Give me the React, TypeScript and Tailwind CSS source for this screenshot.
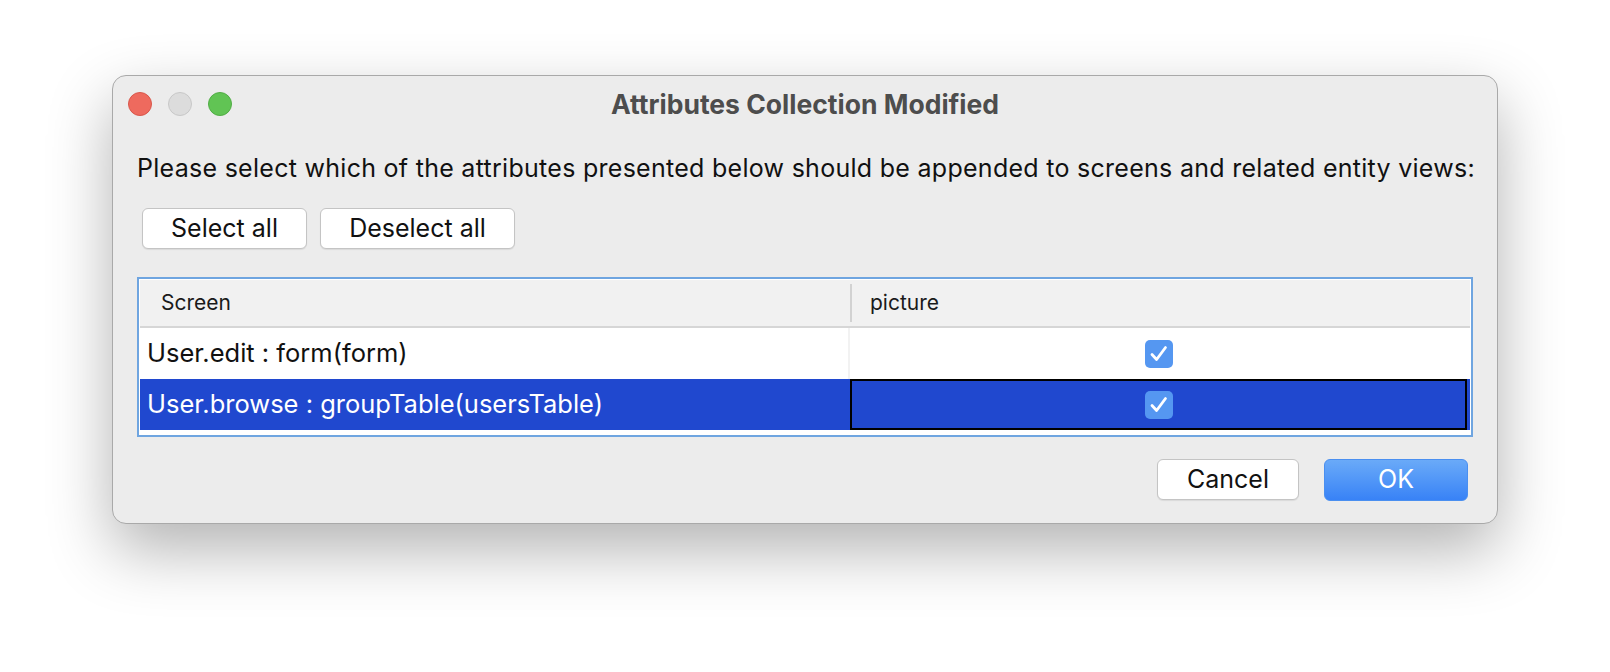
import React from "react";

const font = { fontFamily: "Inter, 'Liberation Sans', sans-serif" };

function Check() {
  return (
    <div className="w-[28px] h-[28px] rounded-[5px] bg-[#5597f1] flex items-center justify-center">
      <svg width="22" height="22" viewBox="0 0 22 22" fill="none">
        <path d="M4 11.5 L8.6 16.5 L17.5 4.5" stroke="white" strokeWidth="2.8" strokeLinecap="round" strokeLinejoin="round" />
      </svg>
    </div>
  );
}

function MacButton({ label, w }: { label: string; w: string }) {
  return (
    <button
      className={`${w} h-[41px] rounded-[6px] bg-white border border-[#c4c4c4] shadow-[0_1px_1px_rgba(0,0,0,0.08)] text-[25px] text-[#111] flex items-center justify-center`}
    >
      {label}
    </button>
  );
}

export default function App() {
  return (
    <div className="w-[1610px] h-[672px] bg-white pl-[112px] pt-[75px]" style={font}>
      {/* ========= WINDOW ========= */}
      <div className="w-[1386px] h-[449px] rounded-[14px] bg-[#ececec] border border-[#a9a9a9] shadow-[0_26px_64px_rgba(0,0,0,0.3)] flex flex-col">
        {/* Title bar */}
        <div className="relative h-[58px] flex items-center justify-center">
          <div className="absolute left-[15px] top-[16px] flex gap-[16px]">
            <div className="w-[24px] h-[24px] rounded-full bg-[#ee6a5e] border border-[#d9574b]" />
            <div className="w-[24px] h-[24px] rounded-full bg-[#dcdcdc] border border-[#c8c8c8]" />
            <div className="w-[24px] h-[24px] rounded-full bg-[#61c454] border border-[#51ad45]" />
          </div>
          <span className="text-[26.5px] font-bold text-[#4d4d4d]">Attributes Collection Modified</span>
        </div>

        {/* Body */}
        <div className="px-[24px] flex flex-col">
          <p className="mt-[18px] text-[25px] leading-[32px] text-[#111] tracking-[0.28px] whitespace-nowrap">
            Please select which of the attributes presented below should be appended to screens and related entity views:
          </p>

          <div className="mt-[24px] flex gap-[13px] pl-[5px]">
            <MacButton label="Select all" w="w-[165px]" />
            <MacButton label="Deselect all" w="w-[195px]" />
          </div>

          {/* Table */}
          <div className="mt-[28px] w-[1336px] h-[160px] border-2 border-[#6fa5e0] bg-white p-px flex flex-col">
            <div className="h-[48px] bg-[#f1f1f1] flex items-center border-b-2 border-[#d6d6d6]">
              <div className="w-[710px] pl-[21px] text-[21px] text-[#1a1a1a]">Screen</div>
              <div className="w-[2px] h-[38px] bg-[#d2d2d2]" />
              <div className="flex-1 pl-[18px] text-[21px] text-[#1a1a1a]">picture</div>
            </div>
            <div className="h-[51px] flex items-center bg-white">
              <div className="w-[708px] pl-[7px] text-[25.5px] text-[#111]">User.edit : form(form)</div>
              <div className="w-[2px] h-full bg-[#f2f2f2]" />
              <div className="w-[617px] flex items-center justify-center">
                <Check />
              </div>
            </div>
            <div className="h-[51px] flex bg-[#2048cf]">
              <div className="w-[710px] pl-[7px] flex items-center text-[25.5px] text-white">User.browse : groupTable(usersTable)</div>
              <div className="w-[617px] border-2 border-black flex items-center justify-center">
                <Check />
              </div>
            </div>
          </div>

          {/* Footer buttons */}
          <div className="mt-[22px] flex justify-end gap-[25px] pr-[5px]">
            <MacButton label="Cancel" w="w-[142px]" />
            <button className="w-[144px] h-[42px] rounded-[6px] bg-gradient-to-b from-[#6aaaf8] to-[#3882f6] border border-[#4a8ff0] text-[25px] text-white flex items-center justify-center">
              OK
            </button>
          </div>
        </div>
      </div>
    </div>
  );
}
